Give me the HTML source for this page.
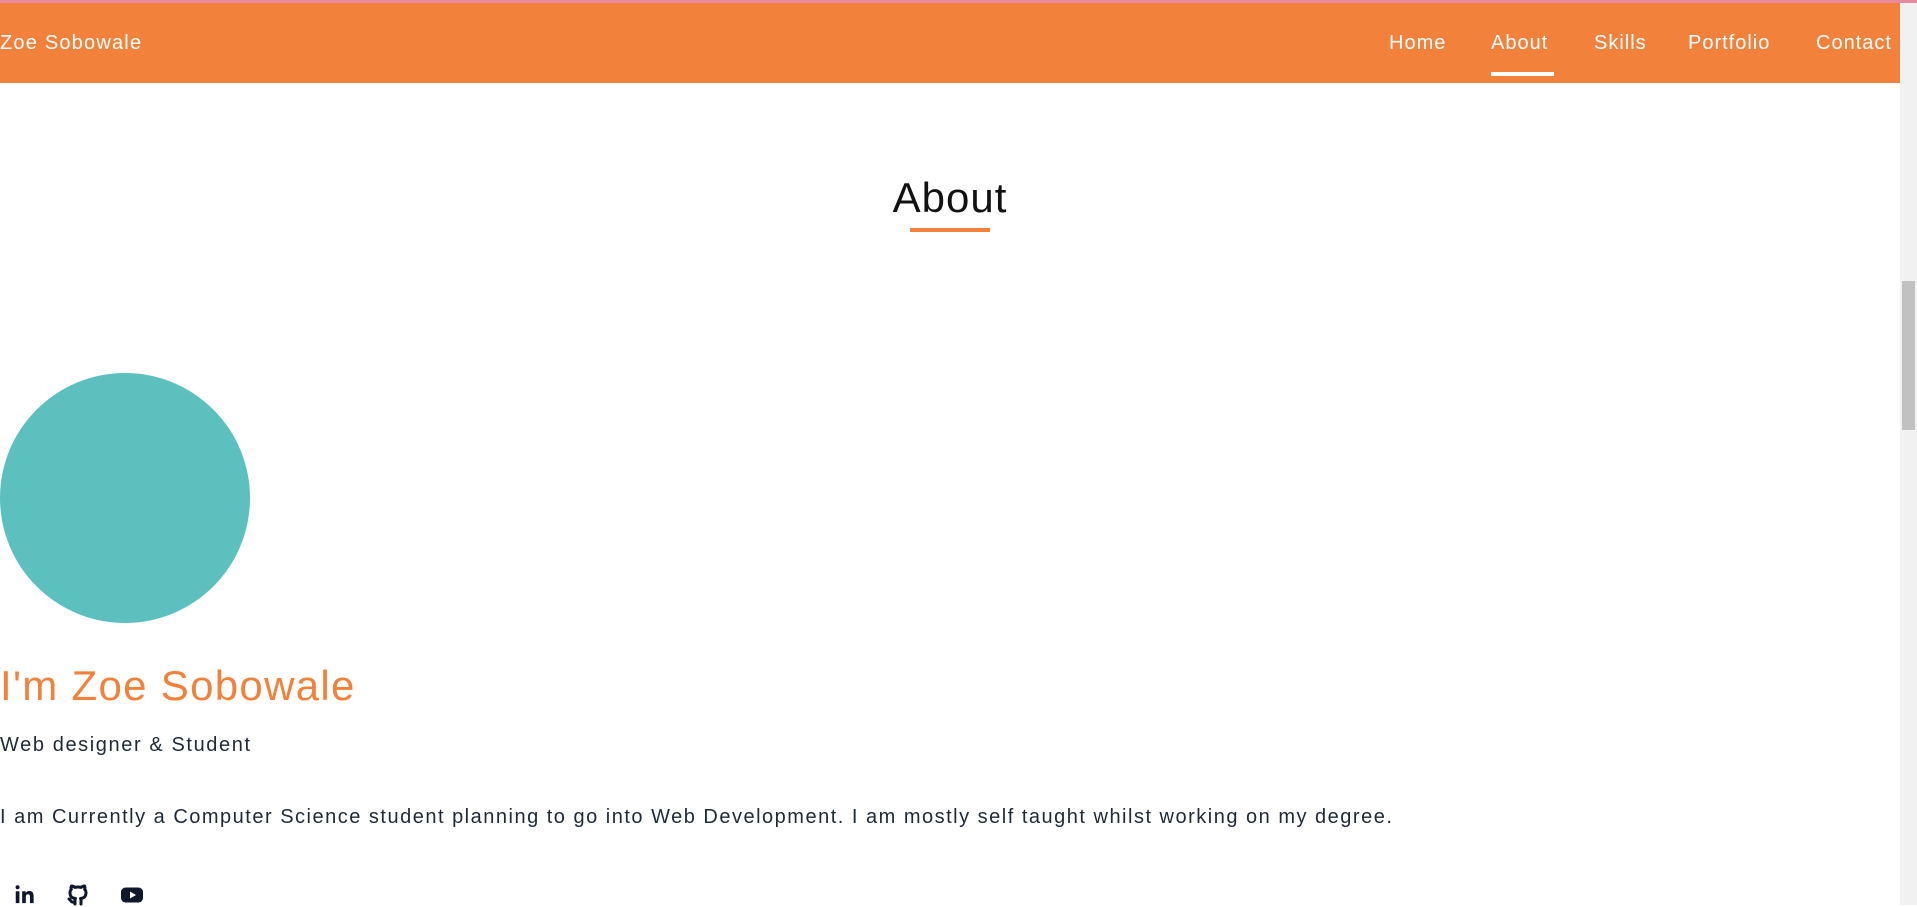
<!DOCTYPE html>
<html><head><meta charset="utf-8"><style>
*{margin:0;padding:0;box-sizing:border-box}
html,body{width:1917px;height:905px;overflow:hidden;background:#fff;font-family:"Liberation Sans",sans-serif;color:#1f2937}
.pink{position:absolute;left:0;top:0;width:1917px;height:3px;background:#e88aa0}
nav{position:absolute;left:0;top:3px;width:1900px;height:80px;background:#f2813c;color:#fff}
.brand{position:absolute;left:0;top:29px;font-size:20px;letter-spacing:1.2px}
nav a{position:absolute;top:29px;font-size:20px;color:#fff;text-decoration:none;letter-spacing:1px}
.ul{position:absolute;left:1491px;top:69px;width:63px;height:4px;background:#fff}
.sb{position:absolute;left:1900px;top:3px;width:17px;height:902px;background:#f1f1f1}
.thumb{position:absolute;left:1902px;top:281px;width:13px;height:149px;background:#c1c1c1}
.arr{position:absolute;left:1904px;top:8px;width:0;height:0;border-left:4px solid transparent;border-right:4px solid transparent;border-bottom:5px solid #505050}
h2{position:absolute;left:0;width:1900px;top:174px;text-align:center;font-weight:normal;font-size:42px;color:#111;letter-spacing:1px}
.tul{position:absolute;left:910px;top:228px;width:80px;height:4px;background:#f2813c}
.circle{position:absolute;left:0;top:373px;width:250px;height:250px;border-radius:50%;background:#5bc0be}
h1{position:absolute;left:0;top:662px;font-weight:normal;font-size:42px;color:#f2813c;letter-spacing:1.3px}
.sub{position:absolute;left:0;top:734px;font-size:20px;letter-spacing:1.6px}
.p{position:absolute;left:0;top:806px;font-size:20px;letter-spacing:1.5px}
.ic{position:absolute;top:883px}
</style></head><body>
<div class="pink"></div>
<nav><div class="brand">Zoe Sobowale</div>
<a style="left:1389px">Home</a><a style="left:1491px">About</a><a style="left:1594px">Skills</a><a style="left:1688px">Portfolio</a><a style="left:1816px">Contact</a>
<div class="ul"></div></nav>
<div class="sb"><div class="arr"></div></div><div class="thumb"></div>
<h2>About</h2><div class="tul"></div>
<div class="circle"></div>
<h1>I'm Zoe Sobowale</h1>
<div class="sub">Web designer &amp; Student</div>
<div class="p">I am Currently a Computer Science student planning to go into Web Development. I am mostly self taught whilst working on my degree.</div>
<svg class="ic" style="left:13px" width="22" height="22" viewBox="0 0 24 24"><path fill="#0f172a" d="M3 9h4v13H3zM5 2.5a2.2 2.2 0 110 4.4 2.2 2.2 0 010-4.4zM10 9h3.8v1.8c.6-1 1.9-2.1 3.9-2.1 4.1 0 4.8 2.7 4.8 6.2V22h-4v-6.3c0-1.5 0-3.4-2.1-3.4s-2.4 1.6-2.4 3.3V22h-4z"/></svg>
<svg class="ic" style="left:66px" width="24" height="24" viewBox="0 0 24 24"><path fill="none" stroke="#0f172a" stroke-width="3" stroke-linecap="round" stroke-linejoin="round" d="M9 19c-4.3 1.4-4.3-2.5-6-3m12 5v-3.5c0-1 .1-1.4-.5-2 2.8-.3 5.5-1.4 5.5-6a4.6 4.6 0 00-1.3-3.2 4.2 4.2 0 00-.1-3.2s-1.1-.3-3.5 1.3a12.3 12.3 0 00-6.2 0C6.5 2.8 5.4 3.1 5.4 3.1a4.2 4.2 0 00-.1 3.2A4.6 4.6 0 004 9.5c0 4.6 2.7 5.7 5.5 6-.6.6-.6 1.2-.5 2V21"/></svg>
<svg class="ic" style="left:120px" width="24" height="24" viewBox="0 0 24 24"><rect x="1" y="4.5" width="22" height="15" rx="4.5" fill="#0f172a"/><path fill="#fff" d="M10 8.5v7l6-3.5z"/></svg>
</body></html>
